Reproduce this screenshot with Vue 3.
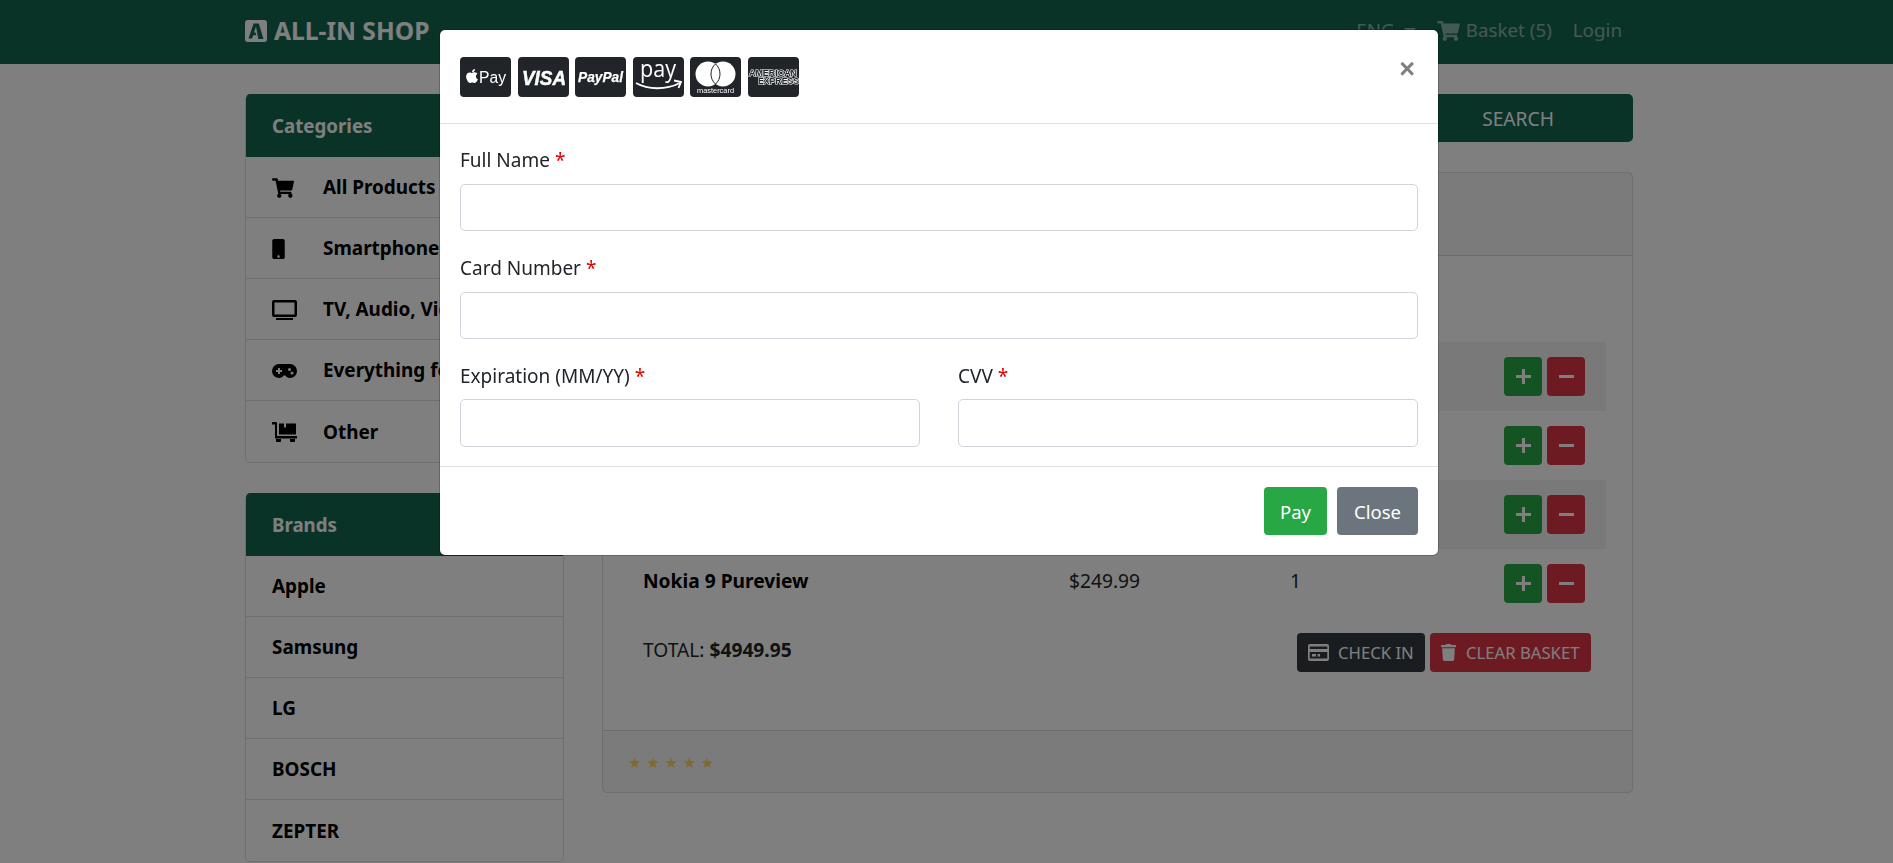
<template>
  <div class="page">
    <header class="navbar">
      <div class="container nav-inner">
        <a class="brand">
          <svg class="brand-logo" viewBox="0 0 22 22">
            <path fill-rule="evenodd" fill="#fff" d="M3 0h16a3 3 0 0 1 3 3v16a3 3 0 0 1-3 3H3a3 3 0 0 1-3-3V3a3 3 0 0 1 3-3zM8.6 3.5 3.5 18.5h3.6l1-3.2h3.2l-.8-2.9H9l2-6 2.3 12.6h5.2L13.8 3.5z" />
          </svg>
          ALL-IN SHOP
        </a>
        <nav class="nav-links">
          <span class="lang">ENG <i class="caret"></i></span>
          <span class="basket">
            <svg class="basket-icon" viewBox="0 0 576 512"><path :d="icons.cart" /></svg>
            Basket (5)
          </span>
          <span>Login</span>
        </nav>
      </div>
    </header>

    <main class="container layout">
      <aside class="sidebar">
        <section class="side-card">
          <h2 class="side-head">Categories</h2>
          <div v-for="cat in categories" :key="cat.name" class="side-item">
            <span class="side-icon">
              <svg v-if="cat.icon === 'cart'" width="22" height="20" viewBox="0 0 576 512"><path :d="icons.cart" /></svg>
              <svg v-else-if="cat.icon === 'mobile'" width="13" height="20" viewBox="0 0 320 512"><path :d="icons.mobile" /></svg>
              <svg v-else-if="cat.icon === 'tv'" width="25" height="20" viewBox="0 0 25 20">
                <path fill-rule="evenodd" d="M2 0h21a2 2 0 0 1 2 2v13a2 2 0 0 1-2 2H2a2 2 0 0 1-2-2V2a2 2 0 0 1 2-2zm.5 2.500v12h20v-12zM4 18h17v2H4z" />
              </svg>
              <svg v-else-if="cat.icon === 'game'" width="25" height="14" viewBox="0 0 25 14">
                <path fill-rule="evenodd" d="M7 0h11a7 7 0 0 1 0 14c-2.300 0-3.700-1-4.500-2.500h-2C10.700 13 9.300 14 7 14A7 7 0 0 1 7 0zM6 4v2H4v2h2v2h2V8h2V6H8V4zm11.500 0a1.500 1.500 0 1 0 0 3 1.500 1.500 0 0 0 0-3zm2.500 3.500a1.500 1.500 0 1 0 0 3 1.500 1.500 0 0 0 0-3z" />
              </svg>
              <svg v-else width="25" height="20" viewBox="0 0 25 20">
                <path d="M0 0h4a1 1 0 0 1 1 1v13h20v2.500H3V2.500H0zM7 1.500h5v4h2v-4h5a1 1 0 0 1 1 0h4v11H7zM4 17h5v1.500a2 2 0 0 1-5 0zM18 17h5v1.500a2 2 0 0 1-5 0z" />
              </svg>
            </span>
            <span class="side-label">{{ cat.name }}</span>
          </div>
        </section>

        <section class="side-card">
          <h2 class="side-head">Brands</h2>
          <div v-for="brand in brands" :key="brand" class="side-item">
            <span class="side-label">{{ brand }}</span>
          </div>
        </section>
      </aside>

      <div class="content">
        <form class="search" @submit.prevent>
          <input class="search-input" type="text" />
          <button class="search-btn">SEARCH</button>
        </form>

        <section class="basket-card">
          <div class="basket-head">Basket</div>
          <div class="basket-body">
            <div class="row row-head">
              <span>Product</span>
              <span>Price</span>
              <span>Quantity</span>
              <span></span>
            </div>
            <div v-for="(item, i) in items" :key="item.name" class="row" :class="{ striped: i % 2 === 0 }">
              <strong class="item-name">{{ item.name }}</strong>
              <span>{{ item.price }}</span>
              <span>{{ item.qty }}</span>
              <span class="qty-btns">
                <button class="sq-btn plus">
                  <svg width="15" height="15" viewBox="0 0 15 15"><path d="M6 0h3v6h6v3H9v6H6V9H0V6h6z" /></svg>
                </button>
                <button class="sq-btn minus">
                  <svg width="15" height="15" viewBox="0 0 15 15"><path d="M0 6h15v3H0z" /></svg>
                </button>
              </span>
            </div>
            <div class="total">
              <span class="total-text">TOTAL: <strong>$4949.95</strong></span>
              <span class="total-btns">
                <button class="act-btn dark">
                  <svg width="21" height="17" viewBox="0 0 21 17">
                    <path fill-rule="evenodd" d="M2 0h17a2 2 0 0 1 2 2v13a2 2 0 0 1-2 2H2a2 2 0 0 1-2-2V2a2 2 0 0 1 2-2zm-.3 2.500v2.500h17.600V2.500zM1.700 8v6.500h17.600V8zM4 10h4v2.500H4zm5.500 0h2.500v2.500H9.500z" />
                  </svg>
                  CHECK IN
                </button>
                <button class="act-btn danger">
                  <svg width="15" height="17" viewBox="0 0 448 512"><path :d="icons.trash" /></svg>
                  CLEAR BASKET
                </button>
              </span>
            </div>
          </div>
          <footer class="basket-foot">
            <span class="stars">★ ★ ★ ★ ★</span>
          </footer>
        </section>
      </div>
    </main>

    <div class="overlay">
      <div class="modal">
        <div class="modal-head">
          <div class="pay-logos">
            <svg class="pay" viewBox="0 0 51 40">
              <rect width="51" height="40" rx="4" fill="#212529" />
              <svg x="6" y="10.500" width="12" height="17" viewBox="0 0 384 512"><path fill="#fff" :d="icons.apple" /></svg>
              <text x="19" y="26" textLength="27" lengthAdjust="spacingAndGlyphs" class="t-apple">Pay</text>
            </svg>
            <svg class="pay" viewBox="0 0 51 40">
              <rect width="51" height="40" rx="4" fill="#212529" />
              <text x="4" y="28" textLength="44" lengthAdjust="spacingAndGlyphs" class="t-visa">VISA</text>
            </svg>
            <svg class="pay" viewBox="0 0 51 40">
              <rect width="51" height="40" rx="4" fill="#212529" />
              <text x="3" y="25" textLength="45" lengthAdjust="spacingAndGlyphs" class="t-paypal">PayPal</text>
            </svg>
            <svg class="pay" viewBox="0 0 51 40">
              <rect width="51" height="40" rx="4" fill="#212529" />
              <text x="7" y="20" textLength="36" lengthAdjust="spacingAndGlyphs" class="t-amazon">pay</text>
              <path d="M3 26c12 7 30 7 44 0" fill="none" stroke="#fff" stroke-width="1.800" />
              <path d="M41 23.500l7 1.500-2.500 6" fill="none" stroke="#fff" stroke-width="1.800" />
            </svg>
            <svg class="pay" viewBox="0 0 51 40">
              <rect width="51" height="40" rx="4" fill="#212529" />
              <circle cx="18" cy="17" r="12.500" fill="#fff" />
              <circle cx="33" cy="17" r="12.500" fill="#fff" />
              <path d="M25.500 7c-6 5-6 15 0 20 6-5 6-15 0-20z" fill="#fff" stroke="#212529" stroke-width="1" />
              <text x="7" y="35.500" textLength="37" lengthAdjust="spacingAndGlyphs" class="t-mc">mastercard</text>
            </svg>
            <svg class="pay" viewBox="0 0 51 40">
              <rect width="51" height="40" rx="4" fill="#212529" />
              <text x="1" y="18.500" textLength="48" lengthAdjust="spacingAndGlyphs" class="t-amex">AMERICAN</text>
              <text x="10" y="27" textLength="41" lengthAdjust="spacingAndGlyphs" class="t-amex">EXPRESS</text>
            </svg>
          </div>
          <button class="close-x">×</button>
        </div>

        <form class="modal-body" @submit.prevent>
          <div class="field">
            <label>Full Name <span class="req">*</span></label>
            <input type="text" />
          </div>
          <div class="field">
            <label>Card Number <span class="req">*</span></label>
            <input type="text" />
          </div>
          <div class="field-row">
            <div class="field">
              <label>Expiration (MM/YY) <span class="req">*</span></label>
              <input type="text" />
            </div>
            <div class="field">
              <label>CVV <span class="req">*</span></label>
              <input type="text" />
            </div>
          </div>
        </form>

        <div class="modal-foot">
          <button class="btn-pay">Pay</button>
          <button class="btn-close">Close</button>
        </div>
      </div>
    </div>
  </div>
</template>

<script setup>
const icons = {
  cart: 'M528.12 301.319l47.273-208C578.806 78.301 567.391 64 551.99 64H159.208l-9.166-44.81C147.758 8.021 137.93 0 126.529 0H24C10.745 0 0 10.745 0 24v16c0 13.255 10.745 24 24 24h69.883l70.248 343.435C147.325 417.1 136 435.222 136 456c0 30.928 25.072 56 56 56s56-25.072 56-56c0-15.674-6.447-29.835-16.824-40h209.647C430.447 426.165 424 440.326 424 456c0 30.928 25.072 56 56 56s56-25.072 56-56c0-22.172-12.888-41.332-31.579-50.405l5.517-24.276c3.413-15.018-8.002-29.319-23.403-29.319H218.117l-6.545-32h293.145c11.206 0 20.92-7.754 23.403-18.681z',
  mobile: 'M272 0H48C21.5 0 0 21.5 0 48v416c0 26.5 21.5 48 48 48h224c26.5 0 48-21.5 48-48V48c0-26.5-21.5-48-48-48zM160 480c-17.7 0-32-14.3-32-32s14.3-32 32-32 32 14.3 32 32-14.3 32-32 32z',
  trash: 'M432 32H312l-9.4-18.7A24 24 0 0 0 281.1 0H166.8a23.72 23.72 0 0 0-21.4 13.3L136 32H16A16 16 0 0 0 0 48v32a16 16 0 0 0 16 16h416a16 16 0 0 0 16-16V48a16 16 0 0 0-16-16zM53.2 467a48 48 0 0 0 47.9 45h245.8a48 48 0 0 0 47.9-45L416 128H32z',
  apple: 'M318.7 268.7c-.2-36.7 16.4-64.4 50-84.8-18.8-26.9-47.2-41.7-84.7-44.6-35.5-2.8-74.3 20.7-88.5 20.7-15 0-49.4-19.7-76.4-19.7C63.3 141.2 4 184.8 4 273.5q0 39.3 14.4 81.2c12.8 36.7 59 126.7 107.2 125.2 25.2-.6 43-17.9 75.8-17.9 31.8 0 48.3 17.9 76.4 17.9 48.6-.7 90.4-82.5 102.6-119.3-65.2-30.7-61.7-90-61.7-91.9zm-56.6-164.2c27.3-32.4 24.8-61.9 24-72.5-24.1 1.4-52 16.4-67.9 34.9-17.5 19.8-27.8 44.3-25.6 71.9 26.1 2 49.9-11.4 69.5-34.3z'
}

const categories = [
  { name: 'All Products', icon: 'cart' },
  { name: 'Smartphones', icon: 'mobile' },
  { name: 'TV, Audio, Video', icon: 'tv' },
  { name: 'Everything for gamers', icon: 'game' },
  { name: 'Other', icon: 'other' }
]

const brands = ['Apple', 'Samsung', 'LG', 'BOSCH', 'ZEPTER']

const items = [
  { name: 'Apple iPhone 11', price: '$1199.99', qty: 1 },
  { name: 'Samsung Galaxy S20', price: '$1299.99', qty: 1 },
  { name: 'LG V60 ThinQ', price: '$1199.99', qty: 1 },
  { name: 'Nokia 9 Pureview', price: '$249.99', qty: 1 }
]
</script>

<style>
html,
body {
  margin: 0;
  height: 100%;
  overflow: hidden;
  background: #fff;
}
</style>

<style scoped>
.page {
  font-family: "Noto Sans", "Open Sans", sans-serif;
  font-size: 19.2px;
  line-height: 27px;
  color: #212529;
  height: 863px;
  overflow: hidden;
}

.container {
  width: 1388px;
  margin-left: 245px;
}

.navbar {
  height: 64px;
  background: #146650;
}

.nav-inner {
  height: 64px;
  box-sizing: border-box;
  padding-bottom: 3px;
  display: flex;
  align-items: center;
  justify-content: space-between;
}

.brand {
  display: flex;
  align-items: center;
  gap: 7px;
  font-size: 24.600px;
  font-weight: 700;
  color: #fff;
}

.brand-logo {
  width: 22px;
  height: 22px;
}

.nav-links {
  display: flex;
  align-items: center;
  gap: 21px;
  margin-right: 11px;
  font-size: 18.800px;
  color: rgba(255, 255, 255, 0.5);
}

.lang {
  display: flex;
  align-items: center;
  gap: 9px;
}

.caret {
  width: 0;
  height: 0;
  border-left: 6px solid transparent;
  border-right: 6px solid transparent;
  border-top: 6px solid rgba(255, 255, 255, 0.5);
}

.basket {
  display: flex;
  align-items: center;
  gap: 6px;
}

.basket-icon {
  width: 23px;
  height: 20px;
  fill: rgba(255, 255, 255, 0.5);
}

.layout {
  display: grid;
  grid-template-columns: 319px 1fr;
  column-gap: 38px;
  padding-top: 30px;
}

.side-card {
  background: #fff;
  border: 1px solid rgba(0, 0, 0, 0.125);
  border-top: 0;
  border-radius: 5px;
  overflow: hidden;
  margin-bottom: 30px;
}

.side-head {
  margin: 0;
  height: 63px;
  line-height: 64px;
  padding: 0 26px;
  background: #146650;
  color: #fff;
  font-size: 18.700px;
  font-weight: 700;
}

.side-item {
  display: flex;
  align-items: center;
  height: 61px;
  box-sizing: border-box;
  padding: 1px 26px 0;
  border-bottom: 1px solid rgba(0, 0, 0, 0.125);
  white-space: nowrap;
  color: #000;
}

.side-item:last-child {
  border-bottom: 0;
}

.side-icon {
  display: flex;
  width: 51px;
  flex: none;
  fill: #000;
}

.side-label {
  font-size: 18.900px;
  font-weight: 700;
}

.search {
  display: flex;
  height: 48px;
  margin-bottom: 30px;
}

.search-input {
  flex: 1;
  border: 1px solid #ced4da;
  box-sizing: border-box;
}

.search-btn {
  width: 230px;
  border: 0;
  border-radius: 0 5px 5px 0;
  background: #146650;
  color: #fff;
  font: inherit;
}

.basket-card {
  border: 1px solid rgba(0, 0, 0, 0.125);
  border-radius: 5px;
  height: 621px;
  box-sizing: border-box;
  display: flex;
  flex-direction: column;
}

.basket-head {
  height: 83px;
  box-sizing: border-box;
  padding: 26px;
  background: rgba(0, 0, 0, 0.03);
  border-bottom: 1px solid rgba(0, 0, 0, 0.125);
}

.basket-body {
  flex: 1;
  padding: 34px 26px 0 23px;
}

.row {
  display: grid;
  grid-template-columns: 426px 221px 100px 1fr;
  height: 69px;
  padding-left: 17px;
  padding-top: 18px;
  box-sizing: border-box;
}

.row-head {
  height: 52px;
  padding-top: 8px;
  font-weight: 700;
}

.striped {
  background: rgba(0, 0, 0, 0.05);
}

.item-name {
  color: #000;
}

.qty-btns {
  display: flex;
  justify-content: flex-end;
  gap: 5px;
  padding-right: 21px;
  margin-top: -3px;
}

.sq-btn {
  width: 38px;
  height: 39px;
  padding: 0;
  border: 0;
  border-radius: 4px;
  display: flex;
  align-items: center;
  justify-content: center;
  fill: #fff;
}

.plus {
  background: #28a745;
}

.minus {
  background: #dc3545;
}

.total {
  display: flex;
  justify-content: space-between;
  padding: 15px 15px 0 17px;
}

.total-text {
  margin-top: 3px;
}

.total-btns {
  display: flex;
  gap: 5px;
}

.act-btn {
  height: 39px;
  box-sizing: border-box;
  padding: 0 11px;
  border: 0;
  border-radius: 4px;
  display: flex;
  align-items: center;
  color: #fff;
  font: inherit;
  font-size: 16.700px;
  fill: #fff;
}

.dark {
  width: 128px;
  gap: 9px;
  background: #343a40;
}

.danger {
  width: 161px;
  gap: 10px;
  background: #dc3545;
}

.basket-foot {
  height: 62px;
  box-sizing: border-box;
  padding: 3px 25px 0;
  display: flex;
  align-items: center;
  background: rgba(0, 0, 0, 0.03);
  border-top: 1px solid rgba(0, 0, 0, 0.125);
}

.stars {
  color: #ffd35c;
  font-size: 15px;
  font-family: "DejaVu Sans", sans-serif;
}

.overlay {
  position: fixed;
  inset: 0;
  padding-right: 15px;
  background: rgba(0, 0, 0, 0.5);
}

.modal {
  width: 1000px;
  box-sizing: border-box;
  margin: 29px auto 0;
  background: #fff;
  border: 1px solid rgba(0, 0, 0, 0.2);
  background-clip: padding-box;
  border-radius: 6px;
}

.modal-head {
  display: flex;
  align-items: center;
  justify-content: space-between;
  height: 94px;
  box-sizing: border-box;
  padding: 0 20px;
  border-bottom: 1px solid #dee2e6;
}

.pay-logos {
  display: flex;
  gap: 6.500px;
}

.pay {
  width: 51px;
  height: 40px;
}

.t-apple {
  font: 400 16px "Liberation Sans", sans-serif;
  fill: #fff;
}

.t-visa {
  font: italic 700 21px "Liberation Sans", sans-serif;
  fill: #fff;
  stroke: #fff;
  stroke-width: 0.500px;
}

.t-paypal {
  font: italic 700 14px "Liberation Sans", sans-serif;
  fill: #fff;
  stroke: #fff;
  stroke-width: 0.250px;
}

.t-amazon {
  font: 400 24px "Open Sans", sans-serif;
  fill: #fff;
}

.t-mc {
  font: 400 6.500px "Liberation Sans", sans-serif;
  fill: #fff;
}

.t-amex {
  font: 700 9.500px "Liberation Sans", sans-serif;
  fill: #212529;
  stroke: #fff;
  stroke-width: 1.200px;
  paint-order: stroke;
}

.close-x {
  align-self: flex-start;
  margin: 25.500px 3px 0 0;
  border: 0;
  background: none;
  padding: 0;
  color: #808080;
  font: 700 27px/1 "Liberation Sans", sans-serif;
}

.modal-body {
  padding: 22px 20px 0;
  height: 342px;
  box-sizing: border-box;
  display: flex;
  flex-direction: column;
  gap: 22.500px;
}

.field {
  display: flex;
  flex-direction: column;
  gap: 9.750px;
}

.field label {
  display: block;
  padding-top: 1px;
  font-size: 19px;
}

.req {
  color: #e00000;
}

.field input {
  height: 47.500px;
  box-sizing: border-box;
  border: 1px solid #ced4da;
  border-radius: 5px;
  background: #fff;
  width: 100%;
}

.field-row {
  display: grid;
  grid-template-columns: 1fr 1fr;
  column-gap: 38px;
}

.modal-foot {
  display: flex;
  justify-content: flex-end;
  gap: 10px;
  padding: 20px;
  border-top: 1px solid #dee2e6;
}

.btn-pay,
.btn-close {
  height: 48px;
  border: 0;
  border-radius: 4px;
  color: #fff;
  font: inherit;
  font-size: 18.500px;
}

.btn-pay {
  width: 63px;
  background: #28a745;
}

.btn-close {
  width: 81px;
  background: #6c757d;
}
</style>
